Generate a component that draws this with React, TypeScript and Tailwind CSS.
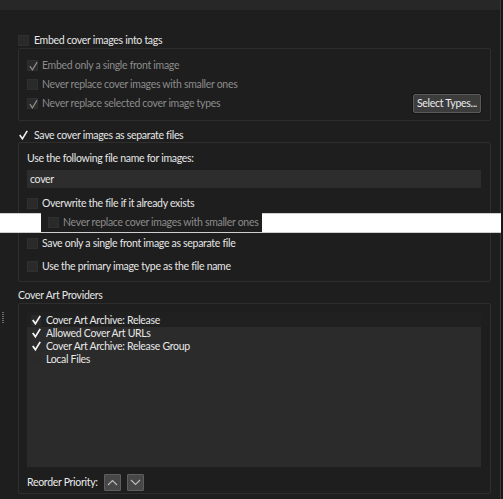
import React from "react";

const Tick = ({ color = "#9a9a9a", w = 1.3 }: { color?: string; w?: number }) => (
  <svg width="11" height="11" viewBox="0 0 11 11" className="absolute left-0 top-0">
    <path d="M2.2 5.6 L4.4 8.8 L8.8 1.6" fill="none" stroke={color} strokeWidth={w} strokeLinecap="square" />
  </svg>
);

function Box({ checked, disabled, boxed = true }: { checked?: boolean; disabled?: boolean; boxed?: boolean }) {
  return (
    <span
      className={
        "relative shrink-0 w-[11px] h-[11px] " +
        (boxed ? "bg-[#2a2a2a] border border-[#2f2f2f]" : "")
      }
    >
      {checked && <Tick color={disabled ? "#8e8e8e" : "#f0f0f0"} w={disabled ? 1.2 : 1.6} />}
    </span>
  );
}

function Row({
  label,
  checked,
  disabled,
  boxed = true,
  h = "h-[19px]",
  gap = "gap-[4px]",
  extra,
  mt = "",
}: {
  label: string;
  checked?: boolean;
  disabled?: boolean;
  boxed?: boolean;
  h?: string;
  gap?: string;
  extra?: React.ReactNode;
  mt?: string;
}) {
  return (
    <div className={"flex items-center " + h + " " + gap + " " + mt}>
      <Box checked={checked} disabled={disabled} boxed={boxed} />
      <span className={"whitespace-nowrap " + (disabled ? "text-[#8c8c8c]" : "text-[#e6e6e6]")}>{label}</span>
      {extra}
    </div>
  );
}

function ProvRow({ label, checked, first }: { label: string; checked?: boolean; first?: boolean }) {
  return (
    <div className={"flex items-center gap-[5px] pl-[4px] " + (first ? "h-[15px] pt-[2px] bg-[#202020]" : "h-[13px]")}>
      <span className={"relative shrink-0 w-[10px] h-[11px] " + (first || !checked ? "bg-[#2a2a2a]" : "")}>
        {checked && <Tick color="#f4f4f4" w={1.7} />}
      </span>
      <span className="text-[#e8e8e8] whitespace-nowrap">{label}</span>
    </div>
  );
}

const Chevron = ({ up }: { up?: boolean }) => (
  <svg width="11" height="7" viewBox="0 0 11 7">
    <path d={up ? "M1 6 L5.5 1.5 L10 6" : "M1 1 L5.5 5.5 L10 1"} fill="none" stroke="#bdbdbd" strokeWidth="1.1" />
  </svg>
);

export default function App() {
  return (
    <div className="relative flex w-[503px] h-[499px] bg-[#1e1e1e] overflow-hidden font-['Lato',sans-serif] text-[10.5px] tracking-[-0.3px] leading-none text-[#e6e6e6]">
      <div className="flex flex-col w-[500px]">
        <div className="h-[10px] bg-[#272727]" />
        <div className="pl-[18px] w-[491px]">
          <Row label="Embed cover images into tags" h="h-[14px]" gap="gap-[5px]" mt="mt-[23px]" />
          <div className="mt-[1px] border border-[#2e2e2e] rounded-[2px] pt-[7px] pb-[7px] pl-[8px] pr-[9px]">
            <Row label="Embed only a single front image" checked disabled />
            <Row label="Never replace cover images with smaller ones" disabled />
            <Row
              label="Never replace selected cover image types"
              checked
              disabled
              extra={
                <button className="ml-auto w-[68px] h-[19px] rounded-[2px] bg-[#3c3c3c] border border-[#5a5a5a] text-[#ececec] text-[10.5px] tracking-[-0.3px] leading-none whitespace-nowrap shadow-[0_0_0_1px_#161616]">
                  Select Types...
                </button>
              }
            />
          </div>
          <Row label="Save cover images as separate files" checked boxed={false} h="h-[14px]" gap="gap-[5px]" mt="mt-[7px]" />
          <div className="border border-[#2e2e2e] rounded-[2px] pt-[6px] pb-[5px] pl-[8px] pr-[9px]">
            <div className="h-[18px] flex items-center whitespace-nowrap">Use the following file name for images:</div>
            <div className="mt-[3px] h-[18px] bg-[#2d2d2d] flex items-center pl-[3px] text-[#e6e6e6]">cover</div>
            <Row label="Overwrite the file if it already exists" h="h-[18px]" mt="mt-[6px]" />
            <div className="h-[20px]" />
            <Row label="Save only a single front image as separate file" h="h-[20px]" mt="mt-[1px]" />
            <Row label="Use the primary image type as the file name" h="h-[20px]" mt="mt-[3px]" />
          </div>
          <div className="mt-[6px] h-[15px] flex items-center text-[#e6e6e6]">Cover Art Providers</div>
          <div className="border border-[#2e2e2e] rounded-[2px] pt-[8px] pb-[2px] pl-[8px] pr-[9px]">
            <div className="h-[155px] bg-[#2b2b2b]">
              <ProvRow label="Cover Art Archive: Release" checked first />
              <ProvRow label="Allowed Cover Art URLs" checked />
              <ProvRow label="Cover Art Archive: Release Group" checked />
              <ProvRow label="Local Files" />
            </div>
            <div className="mt-[7px] h-[17px] flex items-center gap-[6px]">
              <span className="text-[#ececec] whitespace-nowrap">Reorder Priority:</span>
              <button className="w-[17px] h-[17px] bg-[#474747] border border-[#5e5e5e] rounded-[1px] flex items-center justify-center">
                <Chevron up />
              </button>
              <button className="w-[17px] h-[17px] bg-[#474747] border border-[#5e5e5e] rounded-[1px] flex items-center justify-center">
                <Chevron />
              </button>
            </div>
          </div>
        </div>
      </div>
      <div className="w-[1px] bg-[#3a3a3a]" />
      <div className="w-[2px] bg-[#171717]" />

      {/* white overlay band */}
      <div className="absolute left-0 top-[213px] w-[501px] h-[20px] bg-white border-y border-[#cfcfcf]">
        <div className="absolute left-[41px] top-[-1px] w-[221px] h-[19px] bg-[#1e1e1e] flex items-center gap-[4px] pl-[7px]">
          <Box disabled />
          <span className="text-[#8c8c8c] whitespace-nowrap">Never replace cover images with smaller ones</span>
        </div>
      </div>

      {/* splitter handle */}
      <div className="absolute left-[2px] top-[312px] flex flex-col gap-[1px]">
        {[0, 1, 2, 3, 4, 5].map((i) => (
          <div key={i} className="w-[2px] h-[1px] bg-[#6a6a6a]" />
        ))}
      </div>
    </div>
  );
}
